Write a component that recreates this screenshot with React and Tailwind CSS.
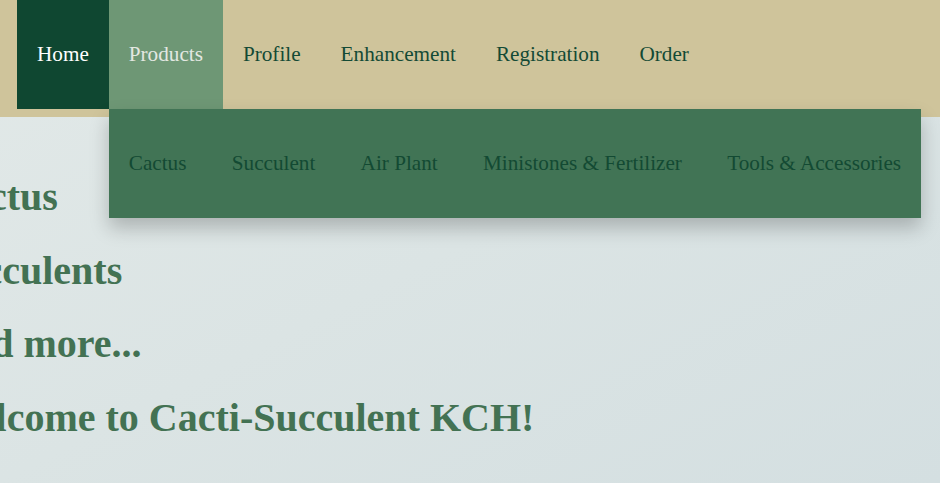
import React from 'react'

const navItems = ['Home', 'Products', 'Profile', 'Enhancement', 'Registration', 'Order']
const subItems = ['Cactus', 'Succulent', 'Air Plant', 'Ministones & Fertilizer', 'Tools & Accessories']

const headings = ['Cactus', 'Succulents', 'And more...', 'Welcome to Cacti-Succulent KCH!']

const App = () => {
    return (
        <div
            className="w-[940px] h-[483px] overflow-hidden bg-gradient-to-br from-[#e2e9e8] via-[#dbe4e4] to-[#d4dfe1]"
            style={{ fontFamily: '"Liberation Serif", "Times New Roman", serif' }}
        >
            {/* Header */}
            <header className="relative z-10 h-[117px] bg-[#cfc49b] pl-[17px]">
                <ul className="flex h-[109px] text-[21.2px]">
                    {navItems.map((item) => {
                        if (item === 'Home') {
                            return (
                                <li key={item} className="flex items-center px-5 bg-[#0f4731] text-white">
                                    {item}
                                </li>
                            )
                        }
                        if (item === 'Products') {
                            return (
                                <li key={item} className="relative flex items-center px-5 bg-[#6e9775] text-[#e3e8e2]">
                                    {item}
                                    {/* Dropdown */}
                                    <ul className="absolute left-0 top-full flex h-[109px] items-center gap-[5.3px] whitespace-nowrap bg-[#417455] shadow-[0_10px_18px_rgba(0,0,0,0.22)]">
                                        {subItems.map((sub) => (
                                            <li key={sub} className="px-5 text-[#134a33]">
                                                {sub}
                                            </li>
                                        ))}
                                    </ul>
                                </li>
                            )
                        }
                        return (
                            <li key={item} className="flex items-center px-5 text-[#134a35]">
                                {item}
                            </li>
                        )
                    })}
                </ul>
            </header>

            {/* Hero text */}
            <main className="pt-[43px]">
                {headings.map((h) => (
                    <h1
                        key={h}
                        className="-ml-[60px] whitespace-nowrap text-[40px] font-bold leading-[73.5px] text-[#437253]"
                    >
                        {h}
                    </h1>
                ))}
            </main>
        </div>
    )
}

export default App
